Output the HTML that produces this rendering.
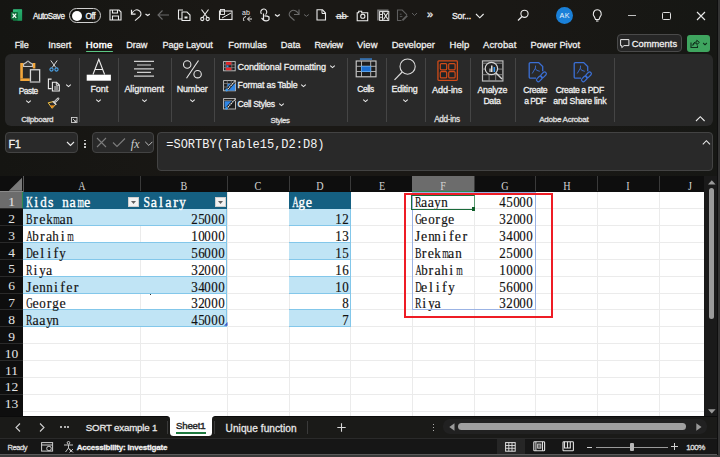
<!DOCTYPE html>
<html><head><meta charset="utf-8"><style>
html,body{margin:0;padding:0;width:720px;height:457px;overflow:hidden;background:#1b1a18;}
.r{position:absolute;}
.t{position:absolute;white-space:nowrap;}
.s{-webkit-text-stroke-width:0.28px;}
svg.r{overflow:visible;}
</style></head><body>
<div class="r" style="left:0px;top:0px;width:720px;height:457px;background:linear-gradient(90deg,#151512 0%,#1a1815 30%,#1a1815 70%,#161714 100%);"></div>
<svg class="r" style="left:10px;top:9px;" width="13" height="12" viewBox="0 0 13 12"><defs><linearGradient id="xg" x1="0" y1="0" x2="0" y2="1"><stop offset="0" stop-color="#33c481"/><stop offset="1" stop-color="#107c41"/></linearGradient></defs><rect x="2.9" y="0.3" width="9.2" height="11.5" rx="0.8" fill="url(#xg)"/><rect x="7.5" y="0.3" width="4.6" height="11.5" fill="#21a366" opacity="0.6"/><rect x="0.8" y="2.9" width="7.2" height="7.5" rx="0.8" fill="#0f6e3b"/><path d="M2.6 4.6L6.2 8.8M6.2 4.6L2.6 8.8" stroke="#fff" stroke-width="1.2"/></svg>
<div class="t s" style="left:33.00px;top:11.000px;font-size:8.15px;line-height:11px;color:#f0f0f0;font-family:'Liberation Sans', sans-serif;letter-spacing:-0.476px;">AutoSave</div>
<div class="r" style="left:69px;top:8px;width:30px;height:13px;border:1px solid #d0d0d0;border-radius:8px;"></div>
<div class="r" style="left:72px;top:10.5px;width:10px;height:10px;border-radius:50%;background:#fff;"></div>
<div class="t s" style="left:85.60px;top:11.000px;font-size:8.26px;line-height:11px;color:#f4f4f4;font-family:'Liberation Sans', sans-serif;letter-spacing:-0.452px;">Off</div>
<svg class="r" style="left:109px;top:9px;" width="13" height="12" viewBox="0 0 13 12"><path d="M1 1h9l2 2v8H1z" fill="none" stroke="#ebebeb" stroke-width="1.1"/><path d="M3.5 1v3h5V1M3.5 11V7h6v4" fill="none" stroke="#ebebeb" stroke-width="1.1"/></svg>
<svg class="r" style="left:129px;top:8px;" width="22" height="14" viewBox="0 0 22 14"><path d="M2.5 1.7V6.1H6.6" fill="none" stroke="#ebebeb" stroke-width="1.2"/><path d="M2.5 6.1C4 3 7 1.2 9.5 2.2C12 3.2 12.8 6.5 11 8.3L6 12.6" fill="none" stroke="#ebebeb" stroke-width="1.1"/><path d="M16.5 6.1L18.7 7.6L20.8 6.1" fill="none" stroke="#ebebeb" stroke-width="1.2"/></svg>
<svg class="r" style="left:157px;top:9px;" width="13" height="12" viewBox="0 0 13 12"><path d="M1 6h11M5.5 1.5L1 6l4.5 4.5" fill="none" stroke="#6a6a6a" stroke-width="1.1"/></svg>
<svg class="r" style="left:177px;top:9px;" width="14" height="12" viewBox="0 0 14 12"><path d="M6 1H1.5v9H5" fill="none" stroke="#ebebeb" stroke-width="1.1"/><path d="M5 3h5l3 3v5.5H5z" fill="none" stroke="#ebebeb" stroke-width="1.1"/><rect x="7.5" y="7.5" width="3" height="2" fill="#ebebeb"/></svg>
<svg class="r" style="left:200px;top:9px;" width="10" height="12" viewBox="0 0 10 12"><path d="M1.5 0.5L7 8M8.5 0.5L3 8" fill="none" stroke="#ebebeb" stroke-width="1.1"/><circle cx="2.3" cy="10" r="1.6" fill="none" stroke="#ebebeb" stroke-width="1.1"/><circle cx="7.7" cy="10" r="1.6" fill="none" stroke="#ebebeb" stroke-width="1.1"/></svg>
<svg class="r" style="left:219px;top:9px;" width="14" height="11" viewBox="0 0 14 11"><rect x="0.5" y="2" width="12.5" height="8.5" fill="none" stroke="#ebebeb" stroke-width="1.1"/><path d="M3 9l9-5" stroke="#ebebeb" stroke-width="1"/><rect x="1.5" y="0.5" width="4" height="5" fill="none" stroke="#ebebeb" stroke-width="0.9"/></svg>
<svg class="r" style="left:241px;top:9px;" width="12" height="13" viewBox="0 0 12 13"><text x="1" y="6" font-size="7" font-family="Liberation Sans" fill="#ebebeb">ab</text><path d="M5 7.5C2.5 8 1.8 10 3 12M9 7.5L6.5 10L9 12.5M6.8 10H11" fill="none" stroke="#ebebeb" stroke-width="1"/></svg>
<svg class="r" style="left:259px;top:9px;" width="11" height="13" viewBox="0 0 11 13"><path d="M6.5 5.5A3 3 0 1 0 2.5 5" fill="none" stroke="#ebebeb" stroke-width="1.1"/><path d="M4.5 4.5v6.5c1 1 4.5 1.3 5.5-0.5V8c-1-1-3-1.2-4.5-1.2" fill="none" stroke="#ebebeb" stroke-width="1.2"/><path d="M2.5 9l2 2" stroke="#ebebeb" stroke-width="1.1"/></svg>
<svg class="r" style="left:274px;top:13px;" width="7" height="5" viewBox="0 0 7 5"><path d="M1 1.5L3.4 3.3L5.8 1.5" fill="none" stroke="#ebebeb" stroke-width="1.3"/></svg>
<svg class="r" style="left:287px;top:8px;" width="14" height="14" viewBox="0 0 14 14"><path d="M12 1.5V6.5H7" fill="none" stroke="#6a6a6a" stroke-width="1.1"/><path d="M12 6.5C10.5 3.5 7.5 1.5 5 2.5C2.5 3.5 1.2 6.5 3 8.5L7.5 12.5" fill="none" stroke="#6a6a6a" stroke-width="1.1"/></svg>
<svg class="r" style="left:302.5px;top:13px;" width="7" height="5" viewBox="0 0 7 5"><path d="M1 1.5L3.4 3.3L5.8 1.5" fill="none" stroke="#6a6a6a" stroke-width="1"/></svg>
<svg class="r" style="left:316px;top:9px;" width="11" height="12" viewBox="0 0 11 12"><path d="M1 0.8h5.5L9.5 4v7H1z" fill="none" stroke="#ebebeb" stroke-width="1.1"/><path d="M6 1v3.5h3.5" fill="none" stroke="#ebebeb" stroke-width="1"/></svg>
<svg class="r" style="left:335px;top:9px;" width="14" height="12" viewBox="0 0 14 12"><text x="1.2" y="9.9" font-size="9.5" font-family="Liberation Sans" fill="#ebebeb" stroke="#ebebeb" stroke-width="0.2">ab</text><path d="M0.5 7.4h13" stroke="#ebebeb" stroke-width="1"/></svg>
<svg class="r" style="left:356px;top:9.5px;" width="13" height="11" viewBox="0 0 13 11"><path d="M1.2 2.8h1.5V1.2h3v1.6h6v8H1.2z" fill="none" stroke="#ebebeb" stroke-width="1.1"/><circle cx="6.8" cy="6.2" r="2.1" fill="none" stroke="#ebebeb" stroke-width="1.1"/></svg>
<svg class="r" style="left:377px;top:9px;" width="13" height="12" viewBox="0 0 13 12"><path d="M1 11.5V1.2H11.5" fill="none" stroke="#7a7a7a" stroke-width="1.6"/><rect x="2.6" y="2.6" width="9.2" height="8.8" fill="none" stroke="#ebebeb" stroke-width="1"/><path d="M2.6 5.5h3M2.6 8.3h3M5.5 2.6v8.8" stroke="#ebebeb" stroke-width="0.9"/><path d="M6.5 3.5l4.5 7M11 3.5l-4.5 7" stroke="#ebebeb" stroke-width="1.1"/></svg>
<svg class="r" style="left:396px;top:9px;" width="13" height="13" viewBox="0 0 13 13"><path d="M5.5 11.5H1.5V1H6.2L11 5.8" fill="none" stroke="#5f5f5f" stroke-width="1.1"/><path d="M11.2 6.6L6.4 11.4" stroke="#5f5f5f" stroke-width="2"/><path d="M3.8 5.2h1.8M3.8 7.6h2.6" stroke="#5f5f5f" stroke-width="0.9"/></svg>
<svg class="r" style="left:411px;top:12px;" width="7" height="5" viewBox="0 0 7 5"><path d="M1 1l2.5 2.5L6 1" fill="none" stroke="#5f5f5f" stroke-width="1"/></svg>
<div class="t s" style="left:427.00px;top:6.500px;font-size:11px;line-height:15px;color:#ebebeb;font-family:'Liberation Sans', sans-serif;">»</div>
<div class="t s" style="left:451.90px;top:10.000px;font-size:8.72px;line-height:12px;color:#f0f0f0;font-family:'Liberation Sans', sans-serif;letter-spacing:-0.212px;">Sor...</div>
<svg class="r" style="left:474.5px;top:13px;" width="10" height="7" viewBox="0 0 10 7"><path d="M1 1l3.8 3.8 3.8-3.8" fill="none" stroke="#ebebeb" stroke-width="1.15"/></svg>
<svg class="r" style="left:517px;top:9px;" width="12" height="13" viewBox="0 0 12 13"><circle cx="7.5" cy="4.8" r="3.6" fill="none" stroke="#ebebeb" stroke-width="1.1"/><path d="M5 7.5L1 11.5" stroke="#ebebeb" stroke-width="1.2"/></svg>
<div class="r" style="left:555.7px;top:6.8px;width:17.4px;height:17.4px;border-radius:50%;background:#1a80d8;"></div>
<div class="t" style="left:559.50px;top:10.500px;font-size:7.24px;line-height:10px;color:#eaf2fb;font-family:'Liberation Sans', sans-serif;letter-spacing:0.335px;">AK</div>
<svg class="r" style="left:592px;top:9px;" width="11" height="13" viewBox="0 0 11 13"><path d="M2.5 8C0 5.5 1.5 0.8 5.3 0.8S10.5 5.5 8 8L7 10.5H3.5z" fill="none" stroke="#ebebeb" stroke-width="1.1"/><path d="M4 12h2.5" stroke="#ebebeb" stroke-width="1.1"/></svg>
<div class="r" style="left:627.7px;top:14.5px;width:8.5px;height:1px;background:#c0c0c0;"></div>
<div class="r" style="left:662.3px;top:11.5px;width:6.4px;height:6.4px;border:1.1px solid #e0e0e0;border-radius:1.5px;"></div>
<svg class="r" style="left:696px;top:11px;" width="10" height="10" viewBox="0 0 10 10"><path d="M1 1l8 8M9 1L1 9" stroke="#e8e8e8" stroke-width="1.1"/></svg>
<div class="t s" style="left:14.70px;top:39.000px;font-size:8.99px;line-height:12px;color:#f0f0f0;font-family:'Liberation Sans', sans-serif;letter-spacing:-0.158px;">File</div>
<div class="t s" style="left:48.30px;top:38.500px;font-size:9.25px;line-height:13px;color:#f0f0f0;font-family:'Liberation Sans', sans-serif;letter-spacing:-0.025px;">Insert</div>
<div class="t s" style="left:126.30px;top:39.000px;font-size:9.19px;line-height:12px;color:#f0f0f0;font-family:'Liberation Sans', sans-serif;letter-spacing:-0.086px;">Draw</div>
<div class="t s" style="left:162.50px;top:39.000px;font-size:9.15px;line-height:12px;color:#f0f0f0;font-family:'Liberation Sans', sans-serif;letter-spacing:-0.088px;">Page Layout</div>
<div class="t s" style="left:228.30px;top:38.500px;font-size:9.29px;line-height:13px;color:#f0f0f0;font-family:'Liberation Sans', sans-serif;">Formulas</div>
<div class="t s" style="left:280.80px;top:38.500px;font-size:9.31px;line-height:13px;color:#f0f0f0;font-family:'Liberation Sans', sans-serif;">Data</div>
<div class="t s" style="left:314.50px;top:39.000px;font-size:8.99px;line-height:12px;color:#f0f0f0;font-family:'Liberation Sans', sans-serif;letter-spacing:-0.197px;">Review</div>
<div class="t s" style="left:357.00px;top:38.000px;font-size:9.42px;line-height:13px;color:#f0f0f0;font-family:'Liberation Sans', sans-serif;letter-spacing:0.082px;">View</div>
<div class="t s" style="left:391.80px;top:38.000px;font-size:9.39px;line-height:13px;color:#f0f0f0;font-family:'Liberation Sans', sans-serif;letter-spacing:0.048px;">Developer</div>
<div class="t s" style="left:449.50px;top:38.000px;font-size:9.47px;line-height:13px;color:#f0f0f0;font-family:'Liberation Sans', sans-serif;letter-spacing:0.113px;">Help</div>
<div class="t s" style="left:483.00px;top:38.000px;font-size:9.48px;line-height:13px;color:#f0f0f0;font-family:'Liberation Sans', sans-serif;letter-spacing:0.107px;">Acrobat</div>
<div class="t s" style="left:530.50px;top:38.500px;font-size:9.29px;line-height:13px;color:#f0f0f0;font-family:'Liberation Sans', sans-serif;">Power Pivot</div>
<div class="t s" style="left:85.80px;top:38.000px;font-size:9.64px;line-height:13px;color:#ffffff;font-family:'Liberation Sans', sans-serif;letter-spacing:0.320px;-webkit-text-stroke:0.45px #ffffff;">Home</div>
<div class="r" style="left:86.3px;top:50.8px;width:27px;height:1.6px;background:#5cc785;border-radius:1px;"></div>
<div class="r" style="left:617.2px;top:34.3px;width:62.5px;height:15.5px;border:1px solid #4a4a4a;border-radius:4px;background:#262626;"></div>
<svg class="r" style="left:620px;top:38.5px;" width="10" height="9" viewBox="0 0 10 9"><path d="M0.6 0.6h8.3v6H4l-2.2 2V6.6H0.6z" fill="none" stroke="#ebebeb" stroke-width="1"/></svg>
<div class="t s" style="left:631.70px;top:37.500px;font-size:9.36px;line-height:13px;color:#f0f0f0;font-family:'Liberation Sans', sans-serif;letter-spacing:0.035px;">Comments</div>
<div class="r" style="left:687px;top:35px;width:23px;height:16.7px;border-radius:3px;background:#3fa55f;"></div>
<svg class="r" style="left:689px;top:37px;" width="20" height="13" viewBox="0 0 20 13"><path d="M2 5.5v5h6.5V8.5" fill="none" stroke="#10301c" stroke-width="1.1"/><path d="M3.8 8.5c0-2.2 1.6-3.6 4-3.6V3.2l2.6 2.2-2.6 2.2V6.1c-1.8 0-3.2 0.8-4 2.4z" fill="none" stroke="#10301c" stroke-width="1"/><path d="M14.2 6l1.8 1.8 1.8-1.8" fill="none" stroke="#10301c" stroke-width="1.1"/></svg>
<div class="r" style="left:5.2px;top:54.3px;width:708px;height:72px;border-radius:6px;background:#292929;"></div>
<div class="r" style="left:79.4px;top:58px;width:1px;height:64px;background:#454545;"></div>
<div class="r" style="left:118.4px;top:58px;width:1px;height:64px;background:#454545;"></div>
<div class="r" style="left:170.6px;top:58px;width:1px;height:64px;background:#454545;"></div>
<div class="r" style="left:214.4px;top:58px;width:1px;height:64px;background:#454545;"></div>
<div class="r" style="left:346.5px;top:58px;width:1px;height:64px;background:#454545;"></div>
<div class="r" style="left:385.6px;top:58px;width:1px;height:64px;background:#454545;"></div>
<div class="r" style="left:424.5px;top:58px;width:1px;height:64px;background:#454545;"></div>
<div class="r" style="left:469.8px;top:58px;width:1px;height:64px;background:#454545;"></div>
<div class="r" style="left:514.7px;top:58px;width:1px;height:64px;background:#454545;"></div>
<div class="r" style="left:614.2px;top:58px;width:1px;height:64px;background:#454545;"></div>
<svg class="r" style="left:18px;top:58px;" width="24" height="26" viewBox="0 0 24 26"><path d="M3.55 20.4V6.2H5.6M14.4 6.2h1.65v4.3" fill="none" stroke="#f3a73b" stroke-width="2.6"/><path d="M2.25 21.7H11.8" stroke="#f3a73b" stroke-width="2.6"/><path d="M5.6 8.5V6L8.6 4.3Q10 1.8 11.4 4.3L14.4 6V8.5z" fill="#3a3a3a" stroke="#c8c8c8" stroke-width="1.1"/><rect x="12.45" y="11.75" width="9.2" height="12.2" fill="#2a2a2a" stroke="#d6d6d6" stroke-width="1.3"/><path d="M12.5 23.6h9" stroke="#8a8a8a" stroke-width="1.2"/></svg>
<div class="t s" style="left:18.80px;top:85.500px;font-size:8.4px;line-height:11px;color:#f0f0f0;font-family:'Liberation Sans', sans-serif;letter-spacing:-0.516px;">Paste</div>
<svg class="r" style="left:24.8px;top:98.8px;" width="7" height="5" viewBox="0 0 7 5"><path d="M1.2 1.6L3.5 3.6L5.8 1.6" fill="none" stroke="#ebebeb" stroke-width="1.05"/></svg>
<svg class="r" style="left:49px;top:60px;" width="10" height="12" viewBox="0 0 10 12"><path d="M1.8 0.5L6.8 7.5M8.2 0.5L3.2 7.5" stroke="#d9d9d9" stroke-width="1"/><circle cx="2.5" cy="9.5" r="1.6" fill="none" stroke="#4aa3e8" stroke-width="1.1"/><circle cx="7.5" cy="9.5" r="1.6" fill="none" stroke="#4aa3e8" stroke-width="1.1"/></svg>
<svg class="r" style="left:47px;top:78px;" width="14" height="14" viewBox="0 0 14 14"><path d="M4.6 1.1H1.4v9.5H4.6" fill="none" stroke="#ebebeb" stroke-width="1.1"/><path d="M5.4 4.3H9.6L12.3 7V13H5.4z" fill="none" stroke="#ebebeb" stroke-width="1.1"/><rect x="7.2" y="8" width="3.8" height="4" fill="#8a8a8a"/><path d="M9.3 4.3v3h3" fill="none" stroke="#ebebeb" stroke-width="0.9"/></svg>
<svg class="r" style="left:64.5px;top:83px;" width="7" height="5" viewBox="0 0 7 5"><path d="M1.2 1.6L3.5 3.6L5.8 1.6" fill="none" stroke="#ebebeb" stroke-width="1.05"/></svg>
<svg class="r" style="left:47px;top:97px;" width="13" height="12" viewBox="0 0 13 12"><path d="M1.2 5.8L6.3 4.6L8.8 7.2L5.2 11.3z" fill="#2a2a2a" stroke="#f3c242" stroke-width="1"/><path d="M3.2 8.6L7.2 8.3L5.2 11z" fill="#f08a1a"/><path d="M5.8 4.2L9.3 7.7" stroke="#d6d6d6" stroke-width="1.3"/><path d="M11.2 1.6L8.2 4.6" stroke="#d6d6d6" stroke-width="2.3" stroke-linecap="round"/><path d="M11.2 1.6L8.2 4.6" stroke="#2a2a2a" stroke-width="0.7"/></svg>
<div class="t s" style="left:21.20px;top:114.000px;font-size:8.12px;line-height:11px;color:#e0e0e0;font-family:'Liberation Sans', sans-serif;letter-spacing:-0.294px;">Clipboard</div>
<svg class="r" style="left:70.5px;top:117px;" width="7" height="6" viewBox="0 0 7 6"><rect x="0.5" y="0.5" width="5.5" height="5" fill="none" stroke="#cfcfcf" stroke-width="0.9"/><path d="M2 2l3 3M5 3v2H3" fill="none" stroke="#cfcfcf" stroke-width="0.9"/></svg>
<svg class="r" style="left:86px;top:58px;" width="26" height="23" viewBox="0 0 26 23"><path d="M7 16.5L12.8 1.2L18.6 16.5M9 11.5h7.6" fill="none" stroke="#ededed" stroke-width="1.1"/><rect x="0.7" y="16.7" width="24.2" height="6" fill="#fff"/></svg>
<div class="t s" style="left:90.40px;top:83.000px;font-size:9.1px;line-height:12px;color:#f0f0f0;font-family:'Liberation Sans', sans-serif;letter-spacing:-0.133px;">Font</div>
<svg class="r" style="left:95.3px;top:97.5px;" width="7" height="5" viewBox="0 0 7 5"><path d="M1.2 1.6L3.5 3.6L5.8 1.6" fill="none" stroke="#ebebeb" stroke-width="1.05"/></svg>
<svg class="r" style="left:133px;top:60px;" width="22" height="18" viewBox="0 0 22 18"><path d="M1 1.3h20M4 5h14M1 8.9h20M4 12.3h14M1 16.2h20" stroke="#cfcfcf" stroke-width="1.2"/></svg>
<div class="t s" style="left:124.40px;top:83.000px;font-size:9.1px;line-height:12px;color:#f0f0f0;font-family:'Liberation Sans', sans-serif;letter-spacing:-0.106px;">Alignment</div>
<svg class="r" style="left:140.5px;top:97.5px;" width="7" height="5" viewBox="0 0 7 5"><path d="M1.2 1.6L3.5 3.6L5.8 1.6" fill="none" stroke="#ebebeb" stroke-width="1.05"/></svg>
<svg class="r" style="left:182px;top:59px;" width="21" height="21" viewBox="0 0 21 21"><circle cx="5.2" cy="5.5" r="3.7" fill="none" stroke="#e8e8e8" stroke-width="1.1"/><circle cx="15.6" cy="15.2" r="3.7" fill="none" stroke="#e8e8e8" stroke-width="1.1"/><path d="M16.5 1.5L4.5 19.3" stroke="#e8e8e8" stroke-width="1.1"/></svg>
<div class="t s" style="left:176.70px;top:83.000px;font-size:9.03px;line-height:12px;color:#f0f0f0;font-family:'Liberation Sans', sans-serif;letter-spacing:-0.180px;">Number</div>
<svg class="r" style="left:188.8px;top:97.5px;" width="7" height="5" viewBox="0 0 7 5"><path d="M1.2 1.6L3.5 3.6L5.8 1.6" fill="none" stroke="#ebebeb" stroke-width="1.05"/></svg>
<svg class="r" style="left:222.5px;top:60.5px;" width="13" height="11" viewBox="0 0 13 11"><rect x="0.6" y="0.6" width="11.6" height="9.2" fill="#1e1e1e" stroke="#c8c8c8" stroke-width="0.9"/><path d="M2.8 0.6v9.2M8.8 0.6v9.2M0.6 3.8h11.6M0.6 6.6h11.6" stroke="#8a8a8a" stroke-width="0.7"/><rect x="3" y="1.1" width="5.3" height="2.6" fill="#e8252a"/><rect x="3.5" y="4.4" width="2" height="2" fill="#3d8be8"/><rect x="3" y="6.7" width="5.3" height="2.5" fill="#e8252a"/></svg>
<svg class="r" style="left:222.5px;top:79.5px;" width="13" height="12" viewBox="0 0 13 12"><rect x="0.6" y="0.6" width="11.9" height="10.2" fill="#1e1e1e" stroke="#c8c8c8" stroke-width="0.9"/><path d="M0.6 3.5h11.9M0.6 7h11.9M4.3 0.6v10.2M8.3 0.6v10.2" stroke="#8a8a8a" stroke-width="0.7"/><rect x="4.6" y="3.8" width="7.6" height="6.8" fill="#2f86e6"/><path d="M11.6 1.4L4.6 9.4" stroke="#161616" stroke-width="2.8"/><path d="M11.6 1.4L4.6 9.4" stroke="#e6e6e6" stroke-width="1.2" stroke-dasharray="1.6 0.6"/><circle cx="3.7" cy="10" r="1.4" fill="#3d9cf0"/></svg>
<svg class="r" style="left:222.5px;top:97.8px;" width="13" height="12" viewBox="0 0 13 12"><rect x="0.6" y="0.6" width="11.9" height="10.4" fill="#1e1e1e" stroke="#c8c8c8" stroke-width="0.9"/><path d="M0.6 2.6h11.9" stroke="#8a8a8a" stroke-width="0.8"/><path d="M1.6 3.3H10.6L5 9H1.6z" fill="#2f86e6"/><path d="M11.8 1.6L4.4 9.8" stroke="#161616" stroke-width="2.8"/><path d="M11.8 1.6L4.4 9.8" stroke="#e6e6e6" stroke-width="1.2" stroke-dasharray="1.6 0.6"/><circle cx="3.5" cy="10.3" r="1.4" fill="#3d9cf0"/></svg>
<div class="t s" style="left:237.60px;top:61.000px;font-size:9.04px;line-height:12px;color:#f0f0f0;font-family:'Liberation Sans', sans-serif;letter-spacing:-0.121px;">Conditional Formatting</div>
<svg class="r" style="left:328.5px;top:64px;" width="7" height="5" viewBox="0 0 7 5"><path d="M1.2 1.6L3.5 3.6L5.8 1.6" fill="none" stroke="#ebebeb" stroke-width="1.05"/></svg>
<div class="t s" style="left:237.60px;top:79.000px;font-size:8.84px;line-height:12px;color:#f0f0f0;font-family:'Liberation Sans', sans-serif;letter-spacing:-0.222px;">Format as Table</div>
<svg class="r" style="left:299.8px;top:83px;" width="7" height="5" viewBox="0 0 7 5"><path d="M1.2 1.6L3.5 3.6L5.8 1.6" fill="none" stroke="#ebebeb" stroke-width="1.05"/></svg>
<div class="t s" style="left:237.60px;top:98.000px;font-size:8.59px;line-height:12px;color:#f0f0f0;font-family:'Liberation Sans', sans-serif;letter-spacing:-0.309px;">Cell Styles</div>
<svg class="r" style="left:277.5px;top:102px;" width="7" height="5" viewBox="0 0 7 5"><path d="M1.2 1.6L3.5 3.6L5.8 1.6" fill="none" stroke="#ebebeb" stroke-width="1.05"/></svg>
<div class="t s" style="left:270.60px;top:115.000px;font-size:7.85px;line-height:11px;color:#e0e0e0;font-family:'Liberation Sans', sans-serif;letter-spacing:-0.418px;">Styles</div>
<svg class="r" style="left:355px;top:57px;" width="22" height="21" viewBox="0 0 22 21"><path d="M4.9 2.05H17" stroke="#3d8fe6" stroke-width="1.3"/><rect x="1.2" y="4" width="19.8" height="15.8" fill="#1e1e1e" stroke="#d0d0d0" stroke-width="1.1"/><path d="M6.5 4v15.8M15.7 4v15.8M1.2 9.3h19.8M1.2 14.5h19.8" stroke="#bdbdbd" stroke-width="0.9"/><rect x="6.5" y="9.3" width="9.2" height="5.2" fill="#1d6fd1" stroke="#58a6f0" stroke-width="0.8"/></svg>
<div class="t s" style="left:357.30px;top:83.500px;font-size:8.43px;line-height:11px;color:#f0f0f0;font-family:'Liberation Sans', sans-serif;letter-spacing:-0.439px;">Cells</div>
<svg class="r" style="left:362.2px;top:97.5px;" width="7" height="5" viewBox="0 0 7 5"><path d="M1.2 1.6L3.5 3.6L5.8 1.6" fill="none" stroke="#ebebeb" stroke-width="1.05"/></svg>
<svg class="r" style="left:393px;top:57px;" width="24" height="24" viewBox="0 0 24 24"><circle cx="14.6" cy="9.6" r="7.6" fill="none" stroke="#dcdcdc" stroke-width="1.1"/><path d="M9.2 15L1.5 22.8" stroke="#dcdcdc" stroke-width="1.2"/></svg>
<div class="t s" style="left:391.50px;top:83.000px;font-size:8.92px;line-height:12px;color:#f0f0f0;font-family:'Liberation Sans', sans-serif;letter-spacing:-0.183px;">Editing</div>
<svg class="r" style="left:401.5px;top:97.5px;" width="7" height="5" viewBox="0 0 7 5"><path d="M1.2 1.6L3.5 3.6L5.8 1.6" fill="none" stroke="#ebebeb" stroke-width="1.05"/></svg>
<svg class="r" style="left:436px;top:59px;" width="23" height="23" viewBox="0 0 23 23"><rect x="1.95" y="1.95" width="19.4" height="19.4" rx="0.8" fill="#1e2326" stroke="#d24b18" stroke-width="1.3"/><rect x="4.3" y="4.6" width="6.4" height="6.2" rx="1" fill="none" stroke="#d24b18" stroke-width="1.2"/><rect x="12.7" y="4.6" width="6.4" height="6.2" rx="1" fill="none" stroke="#d24b18" stroke-width="1.2"/><rect x="4.3" y="12.7" width="6.4" height="6.2" rx="1" fill="none" stroke="#d24b18" stroke-width="1.2"/><rect x="12.7" y="12.7" width="6.4" height="6.2" rx="1" fill="none" stroke="#d24b18" stroke-width="1.2"/></svg>
<div class="t s" style="left:432.10px;top:84.000px;font-size:9.12px;line-height:12px;color:#f0f0f0;font-family:'Liberation Sans', sans-serif;letter-spacing:-0.103px;">Add-ins</div>
<div class="t s" style="left:434.20px;top:114.000px;font-size:8.15px;line-height:11px;color:#e0e0e0;font-family:'Liberation Sans', sans-serif;letter-spacing:-0.288px;">Add-ins</div>
<svg class="r" style="left:481px;top:59px;" width="23" height="23" viewBox="0 0 23 23"><rect x="1.5" y="1.9" width="20.4" height="20.1" fill="#222" stroke="#bdbdbd" stroke-width="1.2"/><path d="M1.5 4.2h20.4M1.5 10.1h20.4M1.5 15.7h20.4M8.1 4.2v17.8M14.7 4.2v17.8" stroke="#8f8f8f" stroke-width="0.9"/><circle cx="10.4" cy="9.5" r="6.2" fill="#232323" stroke="#d6d6d6" stroke-width="1.2"/><path d="M15 14l6 6" stroke="#d6d6d6" stroke-width="1.4"/><rect x="8.5" y="9.5" width="1.1" height="3.5" fill="#e0e0e0"/><rect x="10" y="6.5" width="1.5" height="6.5" fill="#e0e0e0"/><rect x="12.5" y="8" width="1.6" height="5" fill="#3a9af0"/></svg>
<div class="t s" style="left:477.40px;top:84.000px;font-size:8.85px;line-height:12px;color:#f0f0f0;font-family:'Liberation Sans', sans-serif;letter-spacing:-0.251px;">Analyze</div>
<div class="t s" style="left:483.40px;top:95.000px;font-size:8.77px;line-height:12px;color:#f0f0f0;font-family:'Liberation Sans', sans-serif;letter-spacing:-0.350px;">Data</div>
<svg class="r" style="left:528px;top:61px;" width="20" height="21" viewBox="0 0 20 21"><path d="M8 17.2H2.5Q1.2 17.2 1.2 15.9V2.9Q1.2 1.6 2.5 1.6H10.7L14.7 5.6V10.2" fill="none" stroke="#3b6fd4" stroke-width="1.3"/><path d="M4.2 12.5L7.3 7.3L7.6 4.6M7.3 7.3L8.6 9.3L11.8 10.3" fill="none" stroke="#3b6fd4" stroke-width="0.9"/><rect x="8.1" y="16" width="6.6" height="3.6" rx="1.8" transform="rotate(-45 11.4 17.8)" fill="#292929" stroke="#3b6fd4" stroke-width="1.2"/><rect x="12.2" y="12" width="6.6" height="3.6" rx="1.8" transform="rotate(-45 15.5 13.8)" fill="none" stroke="#3b6fd4" stroke-width="1.2"/></svg>
<svg class="r" style="left:573px;top:61px;" width="20" height="21" viewBox="0 0 20 21"><path d="M8 17.2H2.5Q1.2 17.2 1.2 15.9V2.9Q1.2 1.6 2.5 1.6H10.7L14.7 5.6V10.2" fill="none" stroke="#3b6fd4" stroke-width="1.3"/><path d="M4.2 12.5L7.3 7.3L7.6 4.6M7.3 7.3L8.6 9.3L11.8 10.3" fill="none" stroke="#3b6fd4" stroke-width="0.9"/><rect x="8.1" y="16" width="6.6" height="3.6" rx="1.8" transform="rotate(-45 11.4 17.8)" fill="#292929" stroke="#3b6fd4" stroke-width="1.2"/><rect x="12.2" y="12" width="6.6" height="3.6" rx="1.8" transform="rotate(-45 15.5 13.8)" fill="none" stroke="#3b6fd4" stroke-width="1.2"/></svg>
<div class="t s" style="left:523.30px;top:84.000px;font-size:8.66px;line-height:12px;color:#f0f0f0;font-family:'Liberation Sans', sans-serif;letter-spacing:-0.356px;">Create</div>
<div class="t s" style="left:524.20px;top:95.000px;font-size:8.51px;line-height:12px;color:#f0f0f0;font-family:'Liberation Sans', sans-serif;letter-spacing:-0.506px;">a PDF</div>
<div class="t s" style="left:555.80px;top:84.000px;font-size:8.58px;line-height:12px;color:#f0f0f0;font-family:'Liberation Sans', sans-serif;letter-spacing:-0.370px;">Create a PDF</div>
<div class="t s" style="left:553.30px;top:95.000px;font-size:8.81px;line-height:12px;color:#f0f0f0;font-family:'Liberation Sans', sans-serif;letter-spacing:-0.230px;">and Share link</div>
<div class="t s" style="left:539.20px;top:114.000px;font-size:8.1px;line-height:11px;color:#e0e0e0;font-family:'Liberation Sans', sans-serif;letter-spacing:-0.303px;">Adobe Acrobat</div>
<svg class="r" style="left:695px;top:116px;" width="11" height="6" viewBox="0 0 11 6"><path d="M1 5l4.3-4.3L9.6 5" fill="none" stroke="#ebebeb" stroke-width="1.1"/></svg>
<div class="r" style="left:5.1px;top:132.2px;width:70.7px;height:18.5px;border:1px solid #434343;border-radius:4px;background:#292929;"></div>
<div class="t s" style="left:8.60px;top:136.500px;font-size:10.97px;line-height:15px;color:#f4f4f4;font-family:'Liberation Sans', sans-serif;letter-spacing:-0.580px;">F1</div>
<svg class="r" style="left:66px;top:141px;" width="9" height="6" viewBox="0 0 9 6"><path d="M1 1l3.5 3.5L8 1" fill="none" stroke="#ebebeb" stroke-width="1.1"/></svg>
<div class="r" style="left:84.2px;top:139.8px;width:1.7px;height:1.7px;background:#dedede;border-radius:50%;"></div>
<div class="r" style="left:84.2px;top:143px;width:1.7px;height:1.7px;background:#dedede;border-radius:50%;"></div>
<div class="r" style="left:84.2px;top:146.2px;width:1.7px;height:1.7px;background:#dedede;border-radius:50%;"></div>
<div class="r" style="left:92.2px;top:132.2px;width:60.2px;height:18.5px;border:1px solid #434343;border-radius:4px;background:#292929;"></div>
<svg class="r" style="left:96px;top:137px;" width="11" height="11" viewBox="0 0 11 11"><path d="M1 1l9 9M10 1L1 10" stroke="#7c7c7c" stroke-width="1.1"/></svg>
<svg class="r" style="left:112px;top:137px;" width="14" height="11" viewBox="0 0 14 11"><path d="M1 5.5l4 4 8-8" fill="none" stroke="#7c7c7c" stroke-width="1.1"/></svg>
<div class="t" style="left:130.80px;top:136.000px;font-size:12px;line-height:16px;color:#cfcfcf;font-family:'Liberation Serif', serif;"><i>fx</i></div>
<svg class="r" style="left:144.2px;top:140.5px;" width="10" height="6" viewBox="0 0 10 6"><path d="M1.2 0.8l3.6 3.6 3.6-3.6" fill="none" stroke="#bdbdbd" stroke-width="1"/></svg>
<div class="r" style="left:157.2px;top:132.2px;width:553.8px;height:36.7px;border:1px solid #434343;border-radius:4px;background:#292929;"></div>
<div class="t" style="left:166.30px;top:137.000px;font-size:11.99px;line-height:16px;color:#f4f4f4;font-family:'Liberation Mono', monospace;">=SORTBY(Table15,D2:D8)</div>
<svg class="r" style="left:701.5px;top:139.5px;" width="10" height="6" viewBox="0 0 10 6"><path d="M0.8 4.3l3.6-3.6 3.6 3.6" fill="none" stroke="#ebebeb" stroke-width="1.05"/></svg>
<div class="r" style="left:0px;top:175.8px;width:704px;height:16.2px;background:#0e0e0e;"></div>
<div class="r" style="left:0px;top:192px;width:23px;height:223.5px;background:#0e0e0e;"></div>
<div class="r" style="left:23px;top:192px;width:680.8px;height:223.5px;background:#ffffff;"></div>
<div class="r" style="left:160px;top:414px;width:60px;height:6px;background:#ffffff;"></div>
<svg class="r" style="left:0px;top:176px;" width="23" height="16" viewBox="0 0 23 16"><path d="M22 1.8V14.7H8.8z" fill="#7a7a7a"/></svg>
<div class="r" style="left:0px;top:191px;width:23px;height:1px;background:#8a8a8a;"></div>
<div class="r" style="left:139.5px;top:176px;width:1px;height:15px;background:#3a3a3a;"></div>
<div class="r" style="left:226.5px;top:176px;width:1px;height:15px;background:#3a3a3a;"></div>
<div class="r" style="left:288.5px;top:176px;width:1px;height:15px;background:#3a3a3a;"></div>
<div class="r" style="left:350.2px;top:176px;width:1px;height:15px;background:#3a3a3a;"></div>
<div class="r" style="left:411.9px;top:176px;width:1px;height:15px;background:#3a3a3a;"></div>
<div class="r" style="left:473.6px;top:176px;width:1px;height:15px;background:#3a3a3a;"></div>
<div class="r" style="left:535.3px;top:176px;width:1px;height:15px;background:#3a3a3a;"></div>
<div class="r" style="left:597.0px;top:176px;width:1px;height:15px;background:#3a3a3a;"></div>
<div class="r" style="left:658.7px;top:176px;width:1px;height:15px;background:#3a3a3a;"></div>
<div class="r" style="left:22.5px;top:176px;width:1px;height:16px;background:#5a5a5a;"></div>
<div class="r" style="left:412.4px;top:176px;width:61.7px;height:15px;background:#6c6c6c;"></div>
<div class="r" style="left:412.4px;top:190.5px;width:61.7px;height:1.5px;background:#2f8a4f;"></div>
<div class="r" style="left:0px;top:192px;width:22px;height:16.85px;background:#6c6c6c;"></div>
<div class="r" style="left:22px;top:192px;width:1.4px;height:16.85px;background:#2f8a4f;"></div>
<div class="t" style="left:61.5px;top:178.72px;width:40px;text-align:center;font-size:13px;line-height:13px;color:#d4d4d4;font-family:'Liberation Serif', serif;transform:scaleX(0.78);">A</div>
<div class="t" style="left:163.5px;top:178.72px;width:40px;text-align:center;font-size:13px;line-height:13px;color:#d4d4d4;font-family:'Liberation Serif', serif;transform:scaleX(0.78);">B</div>
<div class="t" style="left:238.0px;top:178.72px;width:40px;text-align:center;font-size:13px;line-height:13px;color:#d4d4d4;font-family:'Liberation Serif', serif;transform:scaleX(0.78);">C</div>
<div class="t" style="left:299.9px;top:178.72px;width:40px;text-align:center;font-size:13px;line-height:13px;color:#d4d4d4;font-family:'Liberation Serif', serif;transform:scaleX(0.78);">D</div>
<div class="t" style="left:361.5px;top:178.72px;width:40px;text-align:center;font-size:13px;line-height:13px;color:#d4d4d4;font-family:'Liberation Serif', serif;transform:scaleX(0.78);">E</div>
<div class="t" style="left:423.2px;top:178.72px;width:40px;text-align:center;font-size:13px;line-height:13px;color:#d4d4d4;font-family:'Liberation Serif', serif;transform:scaleX(0.78);">F</div>
<div class="t" style="left:484.9px;top:178.72px;width:40px;text-align:center;font-size:13px;line-height:13px;color:#d4d4d4;font-family:'Liberation Serif', serif;transform:scaleX(0.78);">G</div>
<div class="t" style="left:546.6px;top:178.72px;width:40px;text-align:center;font-size:13px;line-height:13px;color:#d4d4d4;font-family:'Liberation Serif', serif;transform:scaleX(0.78);">H</div>
<div class="t" style="left:608.4px;top:178.72px;width:40px;text-align:center;font-size:13px;line-height:13px;color:#d4d4d4;font-family:'Liberation Serif', serif;transform:scaleX(0.78);">I</div>
<div class="t" style="left:670.0px;top:178.72px;width:40px;text-align:center;font-size:13px;line-height:13px;color:#d4d4d4;font-family:'Liberation Serif', serif;transform:scaleX(0.78);">J</div>
<div class="t" style="left:0px;top:195.00px;width:23px;text-align:center;font-size:13.5px;line-height:13.5px;color:#e4e4e4;font-family:'Liberation Serif', serif;">1</div>
<div class="t" style="left:0px;top:211.85px;width:23px;text-align:center;font-size:13.5px;line-height:13.5px;color:#e4e4e4;font-family:'Liberation Serif', serif;">2</div>
<div class="r" style="left:0px;top:208.35px;width:23px;height:1px;background:#2a2a2a;"></div>
<div class="t" style="left:0px;top:228.70px;width:23px;text-align:center;font-size:13.5px;line-height:13.5px;color:#e4e4e4;font-family:'Liberation Serif', serif;">3</div>
<div class="r" style="left:0px;top:225.2px;width:23px;height:1px;background:#2a2a2a;"></div>
<div class="t" style="left:0px;top:245.55px;width:23px;text-align:center;font-size:13.5px;line-height:13.5px;color:#e4e4e4;font-family:'Liberation Serif', serif;">4</div>
<div class="r" style="left:0px;top:242.05px;width:23px;height:1px;background:#2a2a2a;"></div>
<div class="t" style="left:0px;top:262.40px;width:23px;text-align:center;font-size:13.5px;line-height:13.5px;color:#e4e4e4;font-family:'Liberation Serif', serif;">5</div>
<div class="r" style="left:0px;top:258.9px;width:23px;height:1px;background:#2a2a2a;"></div>
<div class="t" style="left:0px;top:279.25px;width:23px;text-align:center;font-size:13.5px;line-height:13.5px;color:#e4e4e4;font-family:'Liberation Serif', serif;">6</div>
<div class="r" style="left:0px;top:275.75px;width:23px;height:1px;background:#2a2a2a;"></div>
<div class="t" style="left:0px;top:296.10px;width:23px;text-align:center;font-size:13.5px;line-height:13.5px;color:#e4e4e4;font-family:'Liberation Serif', serif;">7</div>
<div class="r" style="left:0px;top:292.6px;width:23px;height:1px;background:#2a2a2a;"></div>
<div class="t" style="left:0px;top:312.95px;width:23px;text-align:center;font-size:13.5px;line-height:13.5px;color:#e4e4e4;font-family:'Liberation Serif', serif;">8</div>
<div class="r" style="left:0px;top:309.45000000000005px;width:23px;height:1px;background:#2a2a2a;"></div>
<div class="t" style="left:0px;top:329.80px;width:23px;text-align:center;font-size:13.5px;line-height:13.5px;color:#e4e4e4;font-family:'Liberation Serif', serif;">9</div>
<div class="r" style="left:0px;top:326.3px;width:23px;height:1px;background:#2a2a2a;"></div>
<div class="t" style="left:0px;top:346.65px;width:23px;text-align:center;font-size:13.5px;line-height:13.5px;color:#e4e4e4;font-family:'Liberation Serif', serif;">10</div>
<div class="r" style="left:0px;top:343.15px;width:23px;height:1px;background:#2a2a2a;"></div>
<div class="t" style="left:0px;top:363.50px;width:23px;text-align:center;font-size:13.5px;line-height:13.5px;color:#e4e4e4;font-family:'Liberation Serif', serif;">11</div>
<div class="r" style="left:0px;top:360.0px;width:23px;height:1px;background:#2a2a2a;"></div>
<div class="t" style="left:0px;top:380.35px;width:23px;text-align:center;font-size:13.5px;line-height:13.5px;color:#e4e4e4;font-family:'Liberation Serif', serif;">12</div>
<div class="r" style="left:0px;top:376.85px;width:23px;height:1px;background:#2a2a2a;"></div>
<div class="t" style="left:0px;top:397.20px;width:23px;text-align:center;font-size:13.5px;line-height:13.5px;color:#e4e4e4;font-family:'Liberation Serif', serif;">13</div>
<div class="r" style="left:0px;top:393.70000000000005px;width:23px;height:1px;background:#2a2a2a;"></div>
<div class="r" style="left:23px;top:208.35px;width:680.8px;height:1px;background:#ebebeb;"></div>
<div class="r" style="left:23px;top:225.2px;width:680.8px;height:1px;background:#ebebeb;"></div>
<div class="r" style="left:23px;top:242.05px;width:680.8px;height:1px;background:#ebebeb;"></div>
<div class="r" style="left:23px;top:258.9px;width:680.8px;height:1px;background:#ebebeb;"></div>
<div class="r" style="left:23px;top:275.75px;width:680.8px;height:1px;background:#ebebeb;"></div>
<div class="r" style="left:23px;top:292.6px;width:680.8px;height:1px;background:#ebebeb;"></div>
<div class="r" style="left:23px;top:309.45000000000005px;width:680.8px;height:1px;background:#ebebeb;"></div>
<div class="r" style="left:23px;top:326.3px;width:680.8px;height:1px;background:#ebebeb;"></div>
<div class="r" style="left:23px;top:343.15px;width:680.8px;height:1px;background:#ebebeb;"></div>
<div class="r" style="left:23px;top:360.0px;width:680.8px;height:1px;background:#ebebeb;"></div>
<div class="r" style="left:23px;top:376.85px;width:680.8px;height:1px;background:#ebebeb;"></div>
<div class="r" style="left:23px;top:393.70000000000005px;width:680.8px;height:1px;background:#ebebeb;"></div>
<div class="r" style="left:23px;top:410.55px;width:680.8px;height:1px;background:#ebebeb;"></div>
<div class="r" style="left:139.5px;top:192px;width:1px;height:223.5px;background:#ebebeb;"></div>
<div class="r" style="left:226.5px;top:192px;width:1px;height:223.5px;background:#ebebeb;"></div>
<div class="r" style="left:288.5px;top:192px;width:1px;height:223.5px;background:#ebebeb;"></div>
<div class="r" style="left:350.2px;top:192px;width:1px;height:223.5px;background:#ebebeb;"></div>
<div class="r" style="left:411.9px;top:192px;width:1px;height:223.5px;background:#ebebeb;"></div>
<div class="r" style="left:473.6px;top:192px;width:1px;height:223.5px;background:#ebebeb;"></div>
<div class="r" style="left:535.3px;top:192px;width:1px;height:223.5px;background:#ebebeb;"></div>
<div class="r" style="left:597.0px;top:192px;width:1px;height:223.5px;background:#ebebeb;"></div>
<div class="r" style="left:658.7px;top:192px;width:1px;height:223.5px;background:#ebebeb;"></div>
<div class="r" style="left:23.2px;top:192.0px;width:203.60000000000002px;height:16.85px;background:#156082;"></div>
<div class="r" style="left:23.2px;top:208.85px;width:203.60000000000002px;height:16.85px;background:#c0e4f5;"></div>
<div class="r" style="left:23.2px;top:225.2px;width:203.60000000000002px;height:1px;background:#83c7ea;"></div>
<div class="r" style="left:23.2px;top:242.55px;width:203.60000000000002px;height:16.85px;background:#c0e4f5;"></div>
<div class="r" style="left:23.2px;top:242.05px;width:203.60000000000002px;height:1px;background:#83c7ea;"></div>
<div class="r" style="left:23.2px;top:258.9px;width:203.60000000000002px;height:1px;background:#83c7ea;"></div>
<div class="r" style="left:23.2px;top:276.25px;width:203.60000000000002px;height:16.85px;background:#c0e4f5;"></div>
<div class="r" style="left:23.2px;top:275.75px;width:203.60000000000002px;height:1px;background:#83c7ea;"></div>
<div class="r" style="left:23.2px;top:292.6px;width:203.60000000000002px;height:1px;background:#83c7ea;"></div>
<div class="r" style="left:23.2px;top:309.95000000000005px;width:203.60000000000002px;height:16.85px;background:#c0e4f5;"></div>
<div class="r" style="left:23.2px;top:309.45000000000005px;width:203.60000000000002px;height:1px;background:#83c7ea;"></div>
<div class="r" style="left:23.2px;top:326.3px;width:203.60000000000002px;height:1px;background:#83c7ea;"></div>
<div class="r" style="left:226.0px;top:208.85px;width:1px;height:117.95000000000002px;background:#83c7ea;"></div>
<div class="r" style="left:289px;top:192.0px;width:61.89999999999998px;height:16.85px;background:#156082;"></div>
<div class="r" style="left:289px;top:208.85px;width:61.89999999999998px;height:16.85px;background:#c0e4f5;"></div>
<div class="r" style="left:289px;top:225.2px;width:61.89999999999998px;height:1px;background:#83c7ea;"></div>
<div class="r" style="left:289px;top:242.55px;width:61.89999999999998px;height:16.85px;background:#c0e4f5;"></div>
<div class="r" style="left:289px;top:242.05px;width:61.89999999999998px;height:1px;background:#83c7ea;"></div>
<div class="r" style="left:289px;top:258.9px;width:61.89999999999998px;height:1px;background:#83c7ea;"></div>
<div class="r" style="left:289px;top:276.25px;width:61.89999999999998px;height:16.85px;background:#c0e4f5;"></div>
<div class="r" style="left:289px;top:275.75px;width:61.89999999999998px;height:1px;background:#83c7ea;"></div>
<div class="r" style="left:289px;top:292.6px;width:61.89999999999998px;height:1px;background:#83c7ea;"></div>
<div class="r" style="left:289px;top:309.95000000000005px;width:61.89999999999998px;height:16.85px;background:#c0e4f5;"></div>
<div class="r" style="left:289px;top:309.45000000000005px;width:61.89999999999998px;height:1px;background:#83c7ea;"></div>
<div class="r" style="left:289px;top:326.3px;width:61.89999999999998px;height:1px;background:#83c7ea;"></div>
<div class="r" style="left:350.09999999999997px;top:208.85px;width:1px;height:117.95000000000002px;background:#83c7ea;"></div>
<div class="r" style="left:128px;top:196.7px;width:11px;height:10.5px;background:#f2f2f2;border:0.5px solid #cfcfcf;box-sizing:border-box;"></div>
<svg class="r" style="left:131px;top:200.5px;" width="6" height="4" viewBox="0 0 6 4"><path d="M0 0h5L2.5 3z" fill="#606060"/></svg>
<div class="r" style="left:215px;top:196.7px;width:11px;height:10.5px;background:#f2f2f2;border:0.5px solid #cfcfcf;box-sizing:border-box;"></div>
<svg class="r" style="left:218px;top:200.5px;" width="6" height="4" viewBox="0 0 6 4"><path d="M0 0h5L2.5 3z" fill="#606060"/></svg>
<svg class="r" style="left:223.5px;top:322.3px;" width="3.5" height="3.8" viewBox="0 0 3.5 3.8"><path d="M3.5 0V3.8H0z" fill="#3758c8"/></svg>
<div class="t" style="left:25.40px;top:193.000px;font-size:14px;line-height:19px;color:#ffffff;font-family:'Liberation Serif', serif;transform:scaleX(1.0);transform-origin:0 0;-webkit-text-stroke:0.35px #fff;"><span style="display:inline-block;width:7.250px;text-align:center;transform:scaleX(0.643)">K</span><span style="display:inline-block;width:7.250px;text-align:center">i</span><span style="display:inline-block;width:7.250px;text-align:center;transform:scaleX(0.929)">d</span><span style="display:inline-block;width:7.250px;text-align:center">s</span><span style="display:inline-block;width:7.250px;text-align:center">&nbsp;</span><span style="display:inline-block;width:7.250px;text-align:center;transform:scaleX(0.929)">n</span><span style="display:inline-block;width:7.250px;text-align:center">a</span><span style="display:inline-block;width:7.250px;text-align:center;transform:scaleX(0.597)">m</span><span style="display:inline-block;width:7.250px;text-align:center">e</span></div>
<div class="t" style="left:142.90px;top:193.000px;font-size:14px;line-height:19px;color:#ffffff;font-family:'Liberation Serif', serif;transform:scaleX(1.0);transform-origin:0 0;-webkit-text-stroke:0.35px #fff;"><span style="display:inline-block;width:7.250px;text-align:center;transform:scaleX(0.835)">S</span><span style="display:inline-block;width:7.250px;text-align:center">a</span><span style="display:inline-block;width:7.250px;text-align:center">l</span><span style="display:inline-block;width:7.250px;text-align:center">a</span><span style="display:inline-block;width:7.250px;text-align:center">r</span><span style="display:inline-block;width:7.250px;text-align:center;transform:scaleX(0.929)">y</span></div>
<div class="t" style="left:290.70px;top:193.000px;font-size:14px;line-height:19px;color:#ffffff;font-family:'Liberation Serif', serif;transform:scaleX(1.0);transform-origin:0 0;-webkit-text-stroke:0.35px #fff;"><span style="display:inline-block;width:7.300px;text-align:center;transform:scaleX(0.643)">A</span><span style="display:inline-block;width:7.300px;text-align:center;transform:scaleX(0.929)">g</span><span style="display:inline-block;width:7.300px;text-align:center">e</span></div>
<div class="t" style="left:25.40px;top:210.000px;font-size:14px;line-height:19px;color:#111;font-family:'Liberation Serif', serif;transform:scaleX(1.0);transform-origin:0 0;-webkit-text-stroke:0.15px #111;"><span style="display:inline-block;width:6.780px;text-align:center;transform:scaleX(0.696)">B</span><span style="display:inline-block;width:6.780px;text-align:center">r</span><span style="display:inline-block;width:6.780px;text-align:center">e</span><span style="display:inline-block;width:6.780px;text-align:center;transform:scaleX(0.929)">k</span><span style="display:inline-block;width:6.780px;text-align:center;transform:scaleX(0.597)">m</span><span style="display:inline-block;width:6.780px;text-align:center">a</span><span style="display:inline-block;width:6.780px;text-align:center;transform:scaleX(0.929)">n</span></div>
<div class="t" style="left:190.90px;top:210.000px;font-size:14px;line-height:19px;color:#111;font-family:'Liberation Serif', serif;transform:scaleX(1.0);transform-origin:0 0;-webkit-text-stroke:0.15px #111;"><span style="display:inline-block;width:6.780px;text-align:center;transform:scaleX(0.929)">2</span><span style="display:inline-block;width:6.780px;text-align:center;transform:scaleX(0.929)">5</span><span style="display:inline-block;width:6.780px;text-align:center;transform:scaleX(0.929)">0</span><span style="display:inline-block;width:6.780px;text-align:center;transform:scaleX(0.929)">0</span><span style="display:inline-block;width:6.780px;text-align:center;transform:scaleX(0.929)">0</span></div>
<div class="t" style="left:334.84px;top:210.000px;font-size:14px;line-height:19px;color:#111;font-family:'Liberation Serif', serif;transform:scaleX(1.0);transform-origin:0 0;-webkit-text-stroke:0.15px #111;"><span style="display:inline-block;width:6.780px;text-align:center;transform:scaleX(0.929)">1</span><span style="display:inline-block;width:6.780px;text-align:center;transform:scaleX(0.929)">2</span></div>
<div class="t" style="left:25.40px;top:227.000px;font-size:14px;line-height:19px;color:#111;font-family:'Liberation Serif', serif;transform:scaleX(1.0);transform-origin:0 0;-webkit-text-stroke:0.15px #111;"><span style="display:inline-block;width:6.780px;text-align:center;transform:scaleX(0.643)">A</span><span style="display:inline-block;width:6.780px;text-align:center;transform:scaleX(0.929)">b</span><span style="display:inline-block;width:6.780px;text-align:center">r</span><span style="display:inline-block;width:6.780px;text-align:center">a</span><span style="display:inline-block;width:6.780px;text-align:center;transform:scaleX(0.929)">h</span><span style="display:inline-block;width:6.780px;text-align:center">i</span><span style="display:inline-block;width:6.780px;text-align:center;transform:scaleX(0.597)">m</span></div>
<div class="t" style="left:190.90px;top:227.000px;font-size:14px;line-height:19px;color:#111;font-family:'Liberation Serif', serif;transform:scaleX(1.0);transform-origin:0 0;-webkit-text-stroke:0.15px #111;"><span style="display:inline-block;width:6.780px;text-align:center;transform:scaleX(0.929)">1</span><span style="display:inline-block;width:6.780px;text-align:center;transform:scaleX(0.929)">0</span><span style="display:inline-block;width:6.780px;text-align:center;transform:scaleX(0.929)">0</span><span style="display:inline-block;width:6.780px;text-align:center;transform:scaleX(0.929)">0</span><span style="display:inline-block;width:6.780px;text-align:center;transform:scaleX(0.929)">0</span></div>
<div class="t" style="left:334.84px;top:227.000px;font-size:14px;line-height:19px;color:#111;font-family:'Liberation Serif', serif;transform:scaleX(1.0);transform-origin:0 0;-webkit-text-stroke:0.15px #111;"><span style="display:inline-block;width:6.780px;text-align:center;transform:scaleX(0.929)">1</span><span style="display:inline-block;width:6.780px;text-align:center;transform:scaleX(0.929)">3</span></div>
<div class="t" style="left:25.40px;top:244.000px;font-size:14px;line-height:19px;color:#111;font-family:'Liberation Serif', serif;transform:scaleX(1.0);transform-origin:0 0;-webkit-text-stroke:0.15px #111;"><span style="display:inline-block;width:6.780px;text-align:center;transform:scaleX(0.643)">D</span><span style="display:inline-block;width:6.780px;text-align:center">e</span><span style="display:inline-block;width:6.780px;text-align:center">l</span><span style="display:inline-block;width:6.780px;text-align:center">i</span><span style="display:inline-block;width:6.780px;text-align:center">f</span><span style="display:inline-block;width:6.780px;text-align:center;transform:scaleX(0.929)">y</span></div>
<div class="t" style="left:190.90px;top:244.000px;font-size:14px;line-height:19px;color:#111;font-family:'Liberation Serif', serif;transform:scaleX(1.0);transform-origin:0 0;-webkit-text-stroke:0.15px #111;"><span style="display:inline-block;width:6.780px;text-align:center;transform:scaleX(0.929)">5</span><span style="display:inline-block;width:6.780px;text-align:center;transform:scaleX(0.929)">6</span><span style="display:inline-block;width:6.780px;text-align:center;transform:scaleX(0.929)">0</span><span style="display:inline-block;width:6.780px;text-align:center;transform:scaleX(0.929)">0</span><span style="display:inline-block;width:6.780px;text-align:center;transform:scaleX(0.929)">0</span></div>
<div class="t" style="left:334.84px;top:244.000px;font-size:14px;line-height:19px;color:#111;font-family:'Liberation Serif', serif;transform:scaleX(1.0);transform-origin:0 0;-webkit-text-stroke:0.15px #111;"><span style="display:inline-block;width:6.780px;text-align:center;transform:scaleX(0.929)">1</span><span style="display:inline-block;width:6.780px;text-align:center;transform:scaleX(0.929)">5</span></div>
<div class="t" style="left:25.40px;top:261.000px;font-size:14px;line-height:19px;color:#111;font-family:'Liberation Serif', serif;transform:scaleX(1.0);transform-origin:0 0;-webkit-text-stroke:0.15px #111;"><span style="display:inline-block;width:6.780px;text-align:center;transform:scaleX(0.696)">R</span><span style="display:inline-block;width:6.780px;text-align:center">i</span><span style="display:inline-block;width:6.780px;text-align:center;transform:scaleX(0.929)">y</span><span style="display:inline-block;width:6.780px;text-align:center">a</span></div>
<div class="t" style="left:190.90px;top:261.000px;font-size:14px;line-height:19px;color:#111;font-family:'Liberation Serif', serif;transform:scaleX(1.0);transform-origin:0 0;-webkit-text-stroke:0.15px #111;"><span style="display:inline-block;width:6.780px;text-align:center;transform:scaleX(0.929)">3</span><span style="display:inline-block;width:6.780px;text-align:center;transform:scaleX(0.929)">2</span><span style="display:inline-block;width:6.780px;text-align:center;transform:scaleX(0.929)">0</span><span style="display:inline-block;width:6.780px;text-align:center;transform:scaleX(0.929)">0</span><span style="display:inline-block;width:6.780px;text-align:center;transform:scaleX(0.929)">0</span></div>
<div class="t" style="left:334.84px;top:261.000px;font-size:14px;line-height:19px;color:#111;font-family:'Liberation Serif', serif;transform:scaleX(1.0);transform-origin:0 0;-webkit-text-stroke:0.15px #111;"><span style="display:inline-block;width:6.780px;text-align:center;transform:scaleX(0.929)">1</span><span style="display:inline-block;width:6.780px;text-align:center;transform:scaleX(0.929)">6</span></div>
<div class="t" style="left:25.40px;top:278.000px;font-size:14px;line-height:19px;color:#111;font-family:'Liberation Serif', serif;transform:scaleX(1.0);transform-origin:0 0;-webkit-text-stroke:0.15px #111;"><span style="display:inline-block;width:6.780px;text-align:center">J</span><span style="display:inline-block;width:6.780px;text-align:center">e</span><span style="display:inline-block;width:6.780px;text-align:center;transform:scaleX(0.929)">n</span><span style="display:inline-block;width:6.780px;text-align:center;transform:scaleX(0.929)">n</span><span style="display:inline-block;width:6.780px;text-align:center">i</span><span style="display:inline-block;width:6.780px;text-align:center">f</span><span style="display:inline-block;width:6.780px;text-align:center">e</span><span style="display:inline-block;width:6.780px;text-align:center">r</span></div>
<div class="t" style="left:190.90px;top:278.000px;font-size:14px;line-height:19px;color:#111;font-family:'Liberation Serif', serif;transform:scaleX(1.0);transform-origin:0 0;-webkit-text-stroke:0.15px #111;"><span style="display:inline-block;width:6.780px;text-align:center;transform:scaleX(0.929)">3</span><span style="display:inline-block;width:6.780px;text-align:center;transform:scaleX(0.929)">4</span><span style="display:inline-block;width:6.780px;text-align:center;transform:scaleX(0.929)">0</span><span style="display:inline-block;width:6.780px;text-align:center;transform:scaleX(0.929)">0</span><span style="display:inline-block;width:6.780px;text-align:center;transform:scaleX(0.929)">0</span></div>
<div class="t" style="left:334.84px;top:278.000px;font-size:14px;line-height:19px;color:#111;font-family:'Liberation Serif', serif;transform:scaleX(1.0);transform-origin:0 0;-webkit-text-stroke:0.15px #111;"><span style="display:inline-block;width:6.780px;text-align:center;transform:scaleX(0.929)">1</span><span style="display:inline-block;width:6.780px;text-align:center;transform:scaleX(0.929)">0</span></div>
<div class="t" style="left:25.40px;top:294.000px;font-size:14px;line-height:19px;color:#111;font-family:'Liberation Serif', serif;transform:scaleX(1.0);transform-origin:0 0;-webkit-text-stroke:0.15px #111;"><span style="display:inline-block;width:6.780px;text-align:center;transform:scaleX(0.643)">G</span><span style="display:inline-block;width:6.780px;text-align:center">e</span><span style="display:inline-block;width:6.780px;text-align:center;transform:scaleX(0.929)">o</span><span style="display:inline-block;width:6.780px;text-align:center">r</span><span style="display:inline-block;width:6.780px;text-align:center;transform:scaleX(0.929)">g</span><span style="display:inline-block;width:6.780px;text-align:center">e</span></div>
<div class="t" style="left:190.90px;top:294.000px;font-size:14px;line-height:19px;color:#111;font-family:'Liberation Serif', serif;transform:scaleX(1.0);transform-origin:0 0;-webkit-text-stroke:0.15px #111;"><span style="display:inline-block;width:6.780px;text-align:center;transform:scaleX(0.929)">3</span><span style="display:inline-block;width:6.780px;text-align:center;transform:scaleX(0.929)">2</span><span style="display:inline-block;width:6.780px;text-align:center;transform:scaleX(0.929)">0</span><span style="display:inline-block;width:6.780px;text-align:center;transform:scaleX(0.929)">0</span><span style="display:inline-block;width:6.780px;text-align:center;transform:scaleX(0.929)">0</span></div>
<div class="t" style="left:341.62px;top:294.000px;font-size:14px;line-height:19px;color:#111;font-family:'Liberation Serif', serif;transform:scaleX(1.0);transform-origin:0 0;-webkit-text-stroke:0.15px #111;"><span style="display:inline-block;width:6.780px;text-align:center;transform:scaleX(0.929)">8</span></div>
<div class="t" style="left:25.40px;top:311.000px;font-size:14px;line-height:19px;color:#111;font-family:'Liberation Serif', serif;transform:scaleX(1.0);transform-origin:0 0;-webkit-text-stroke:0.15px #111;"><span style="display:inline-block;width:6.780px;text-align:center;transform:scaleX(0.696)">R</span><span style="display:inline-block;width:6.780px;text-align:center">a</span><span style="display:inline-block;width:6.780px;text-align:center">a</span><span style="display:inline-block;width:6.780px;text-align:center;transform:scaleX(0.929)">y</span><span style="display:inline-block;width:6.780px;text-align:center;transform:scaleX(0.929)">n</span></div>
<div class="t" style="left:190.90px;top:311.000px;font-size:14px;line-height:19px;color:#111;font-family:'Liberation Serif', serif;transform:scaleX(1.0);transform-origin:0 0;-webkit-text-stroke:0.15px #111;"><span style="display:inline-block;width:6.780px;text-align:center;transform:scaleX(0.929)">4</span><span style="display:inline-block;width:6.780px;text-align:center;transform:scaleX(0.929)">5</span><span style="display:inline-block;width:6.780px;text-align:center;transform:scaleX(0.929)">0</span><span style="display:inline-block;width:6.780px;text-align:center;transform:scaleX(0.929)">0</span><span style="display:inline-block;width:6.780px;text-align:center;transform:scaleX(0.929)">0</span></div>
<div class="t" style="left:341.62px;top:311.000px;font-size:14px;line-height:19px;color:#111;font-family:'Liberation Serif', serif;transform:scaleX(1.0);transform-origin:0 0;-webkit-text-stroke:0.15px #111;"><span style="display:inline-block;width:6.780px;text-align:center;transform:scaleX(0.929)">7</span></div>
<div class="t" style="left:414.00px;top:193.000px;font-size:14px;line-height:19px;color:#111;font-family:'Liberation Serif', serif;transform:scaleX(1.0);transform-origin:0 0;-webkit-text-stroke:0.15px #111;"><span style="display:inline-block;width:6.780px;text-align:center;transform:scaleX(0.696)">R</span><span style="display:inline-block;width:6.780px;text-align:center">a</span><span style="display:inline-block;width:6.780px;text-align:center">a</span><span style="display:inline-block;width:6.780px;text-align:center;transform:scaleX(0.929)">y</span><span style="display:inline-block;width:6.780px;text-align:center;transform:scaleX(0.929)">n</span></div>
<div class="t" style="left:499.20px;top:193.000px;font-size:14px;line-height:19px;color:#111;font-family:'Liberation Serif', serif;transform:scaleX(1.0);transform-origin:0 0;-webkit-text-stroke:0.15px #111;"><span style="display:inline-block;width:6.780px;text-align:center;transform:scaleX(0.929)">4</span><span style="display:inline-block;width:6.780px;text-align:center;transform:scaleX(0.929)">5</span><span style="display:inline-block;width:6.780px;text-align:center;transform:scaleX(0.929)">0</span><span style="display:inline-block;width:6.780px;text-align:center;transform:scaleX(0.929)">0</span><span style="display:inline-block;width:6.780px;text-align:center;transform:scaleX(0.929)">0</span></div>
<div class="t" style="left:414.00px;top:210.000px;font-size:14px;line-height:19px;color:#111;font-family:'Liberation Serif', serif;transform:scaleX(1.0);transform-origin:0 0;-webkit-text-stroke:0.15px #111;"><span style="display:inline-block;width:6.780px;text-align:center;transform:scaleX(0.643)">G</span><span style="display:inline-block;width:6.780px;text-align:center">e</span><span style="display:inline-block;width:6.780px;text-align:center;transform:scaleX(0.929)">o</span><span style="display:inline-block;width:6.780px;text-align:center">r</span><span style="display:inline-block;width:6.780px;text-align:center;transform:scaleX(0.929)">g</span><span style="display:inline-block;width:6.780px;text-align:center">e</span></div>
<div class="t" style="left:499.20px;top:210.000px;font-size:14px;line-height:19px;color:#111;font-family:'Liberation Serif', serif;transform:scaleX(1.0);transform-origin:0 0;-webkit-text-stroke:0.15px #111;"><span style="display:inline-block;width:6.780px;text-align:center;transform:scaleX(0.929)">3</span><span style="display:inline-block;width:6.780px;text-align:center;transform:scaleX(0.929)">2</span><span style="display:inline-block;width:6.780px;text-align:center;transform:scaleX(0.929)">0</span><span style="display:inline-block;width:6.780px;text-align:center;transform:scaleX(0.929)">0</span><span style="display:inline-block;width:6.780px;text-align:center;transform:scaleX(0.929)">0</span></div>
<div class="t" style="left:414.00px;top:227.000px;font-size:14px;line-height:19px;color:#111;font-family:'Liberation Serif', serif;transform:scaleX(1.0);transform-origin:0 0;-webkit-text-stroke:0.15px #111;"><span style="display:inline-block;width:6.780px;text-align:center">J</span><span style="display:inline-block;width:6.780px;text-align:center">e</span><span style="display:inline-block;width:6.780px;text-align:center;transform:scaleX(0.929)">n</span><span style="display:inline-block;width:6.780px;text-align:center;transform:scaleX(0.929)">n</span><span style="display:inline-block;width:6.780px;text-align:center">i</span><span style="display:inline-block;width:6.780px;text-align:center">f</span><span style="display:inline-block;width:6.780px;text-align:center">e</span><span style="display:inline-block;width:6.780px;text-align:center">r</span></div>
<div class="t" style="left:499.20px;top:227.000px;font-size:14px;line-height:19px;color:#111;font-family:'Liberation Serif', serif;transform:scaleX(1.0);transform-origin:0 0;-webkit-text-stroke:0.15px #111;"><span style="display:inline-block;width:6.780px;text-align:center;transform:scaleX(0.929)">3</span><span style="display:inline-block;width:6.780px;text-align:center;transform:scaleX(0.929)">4</span><span style="display:inline-block;width:6.780px;text-align:center;transform:scaleX(0.929)">0</span><span style="display:inline-block;width:6.780px;text-align:center;transform:scaleX(0.929)">0</span><span style="display:inline-block;width:6.780px;text-align:center;transform:scaleX(0.929)">0</span></div>
<div class="t" style="left:414.00px;top:244.000px;font-size:14px;line-height:19px;color:#111;font-family:'Liberation Serif', serif;transform:scaleX(1.0);transform-origin:0 0;-webkit-text-stroke:0.15px #111;"><span style="display:inline-block;width:6.780px;text-align:center;transform:scaleX(0.696)">B</span><span style="display:inline-block;width:6.780px;text-align:center">r</span><span style="display:inline-block;width:6.780px;text-align:center">e</span><span style="display:inline-block;width:6.780px;text-align:center;transform:scaleX(0.929)">k</span><span style="display:inline-block;width:6.780px;text-align:center;transform:scaleX(0.597)">m</span><span style="display:inline-block;width:6.780px;text-align:center">a</span><span style="display:inline-block;width:6.780px;text-align:center;transform:scaleX(0.929)">n</span></div>
<div class="t" style="left:499.20px;top:244.000px;font-size:14px;line-height:19px;color:#111;font-family:'Liberation Serif', serif;transform:scaleX(1.0);transform-origin:0 0;-webkit-text-stroke:0.15px #111;"><span style="display:inline-block;width:6.780px;text-align:center;transform:scaleX(0.929)">2</span><span style="display:inline-block;width:6.780px;text-align:center;transform:scaleX(0.929)">5</span><span style="display:inline-block;width:6.780px;text-align:center;transform:scaleX(0.929)">0</span><span style="display:inline-block;width:6.780px;text-align:center;transform:scaleX(0.929)">0</span><span style="display:inline-block;width:6.780px;text-align:center;transform:scaleX(0.929)">0</span></div>
<div class="t" style="left:414.00px;top:261.000px;font-size:14px;line-height:19px;color:#111;font-family:'Liberation Serif', serif;transform:scaleX(1.0);transform-origin:0 0;-webkit-text-stroke:0.15px #111;"><span style="display:inline-block;width:6.780px;text-align:center;transform:scaleX(0.643)">A</span><span style="display:inline-block;width:6.780px;text-align:center;transform:scaleX(0.929)">b</span><span style="display:inline-block;width:6.780px;text-align:center">r</span><span style="display:inline-block;width:6.780px;text-align:center">a</span><span style="display:inline-block;width:6.780px;text-align:center;transform:scaleX(0.929)">h</span><span style="display:inline-block;width:6.780px;text-align:center">i</span><span style="display:inline-block;width:6.780px;text-align:center;transform:scaleX(0.597)">m</span></div>
<div class="t" style="left:499.20px;top:261.000px;font-size:14px;line-height:19px;color:#111;font-family:'Liberation Serif', serif;transform:scaleX(1.0);transform-origin:0 0;-webkit-text-stroke:0.15px #111;"><span style="display:inline-block;width:6.780px;text-align:center;transform:scaleX(0.929)">1</span><span style="display:inline-block;width:6.780px;text-align:center;transform:scaleX(0.929)">0</span><span style="display:inline-block;width:6.780px;text-align:center;transform:scaleX(0.929)">0</span><span style="display:inline-block;width:6.780px;text-align:center;transform:scaleX(0.929)">0</span><span style="display:inline-block;width:6.780px;text-align:center;transform:scaleX(0.929)">0</span></div>
<div class="t" style="left:414.00px;top:278.000px;font-size:14px;line-height:19px;color:#111;font-family:'Liberation Serif', serif;transform:scaleX(1.0);transform-origin:0 0;-webkit-text-stroke:0.15px #111;"><span style="display:inline-block;width:6.780px;text-align:center;transform:scaleX(0.643)">D</span><span style="display:inline-block;width:6.780px;text-align:center">e</span><span style="display:inline-block;width:6.780px;text-align:center">l</span><span style="display:inline-block;width:6.780px;text-align:center">i</span><span style="display:inline-block;width:6.780px;text-align:center">f</span><span style="display:inline-block;width:6.780px;text-align:center;transform:scaleX(0.929)">y</span></div>
<div class="t" style="left:499.20px;top:278.000px;font-size:14px;line-height:19px;color:#111;font-family:'Liberation Serif', serif;transform:scaleX(1.0);transform-origin:0 0;-webkit-text-stroke:0.15px #111;"><span style="display:inline-block;width:6.780px;text-align:center;transform:scaleX(0.929)">5</span><span style="display:inline-block;width:6.780px;text-align:center;transform:scaleX(0.929)">6</span><span style="display:inline-block;width:6.780px;text-align:center;transform:scaleX(0.929)">0</span><span style="display:inline-block;width:6.780px;text-align:center;transform:scaleX(0.929)">0</span><span style="display:inline-block;width:6.780px;text-align:center;transform:scaleX(0.929)">0</span></div>
<div class="t" style="left:414.00px;top:294.000px;font-size:14px;line-height:19px;color:#111;font-family:'Liberation Serif', serif;transform:scaleX(1.0);transform-origin:0 0;-webkit-text-stroke:0.15px #111;"><span style="display:inline-block;width:6.780px;text-align:center;transform:scaleX(0.696)">R</span><span style="display:inline-block;width:6.780px;text-align:center">i</span><span style="display:inline-block;width:6.780px;text-align:center;transform:scaleX(0.929)">y</span><span style="display:inline-block;width:6.780px;text-align:center">a</span></div>
<div class="t" style="left:499.20px;top:294.000px;font-size:14px;line-height:19px;color:#111;font-family:'Liberation Serif', serif;transform:scaleX(1.0);transform-origin:0 0;-webkit-text-stroke:0.15px #111;"><span style="display:inline-block;width:6.780px;text-align:center;transform:scaleX(0.929)">3</span><span style="display:inline-block;width:6.780px;text-align:center;transform:scaleX(0.929)">2</span><span style="display:inline-block;width:6.780px;text-align:center;transform:scaleX(0.929)">0</span><span style="display:inline-block;width:6.780px;text-align:center;transform:scaleX(0.929)">0</span><span style="display:inline-block;width:6.780px;text-align:center;transform:scaleX(0.929)">0</span></div>
<div class="r" style="left:411.9px;top:192px;width:123.9px;height:118px;border:1px solid #9bb3e4;box-sizing:border-box;"></div>
<div class="r" style="left:411px;top:195px;width:64px;height:15px;border:1px solid #1a6b3a;border-right-color:#5a9a70;box-sizing:border-box;"></div>
<div class="r" style="left:472px;top:207px;width:3px;height:4px;background:#0f5f2a;"></div>
<div class="r" style="left:404.1px;top:192.8px;width:148.6px;height:124.9px;border:2.2px solid #ee1c25;box-sizing:border-box;"></div>
<div class="r" style="left:150px;top:293.5px;width:1.2px;height:1.5px;background:#333;"></div>
<div class="r" style="left:703.8px;top:176px;width:14px;height:239.5px;background:#1a1a1a;"></div>
<svg class="r" style="left:707.5px;top:180px;" width="8" height="5" viewBox="0 0 8 5"><path d="M0 4.5L3.8 0.3L7.6 4.5z" fill="#9a9a9a"/></svg>
<div class="r" style="left:708.6px;top:188px;width:5.6px;height:131px;border-radius:3px;background:#9a9a9a;"></div>
<svg class="r" style="left:707.5px;top:408.5px;" width="8" height="5" viewBox="0 0 8 5"><path d="M0 0.3L3.8 4.5L7.6 0.3z" fill="#9a9a9a"/></svg>
<div class="r" style="left:0;top:415.5px;width:169.8px;height:21.5px;background:#1a1a18;border-top:1px solid #0b0b0b;border-top-right-radius:3.5px;"></div>
<div class="r" style="left:212.2px;top:415.5px;width:505.8px;height:21.5px;background:#1a1a18;border-top:1px solid #0b0b0b;border-top-left-radius:3.5px;"></div>
<div class="r" style="left:0px;top:438px;width:718px;height:1px;background:#2a2a2a;"></div>
<div class="r" style="left:0px;top:439px;width:718px;height:15px;background:#161616;"></div>
<div class="r" style="left:0px;top:453.5px;width:717px;height:1.6px;background:#5a5a5a;"></div>
<svg class="r" style="left:15px;top:422.5px;" width="6" height="9" viewBox="0 0 6 9"><path d="M5 0.5L1 4.5l4 4" fill="none" stroke="#d0d0d0" stroke-width="1.1"/></svg>
<svg class="r" style="left:39px;top:422.5px;" width="6" height="9" viewBox="0 0 6 9"><path d="M1 0.5l4 4-4 4" fill="none" stroke="#d0d0d0" stroke-width="1.1"/></svg>
<div class="r" style="left:60.4px;top:425.6px;width:2.1px;height:2.1px;background:#e4e4e4;border-radius:50%;"></div>
<div class="r" style="left:63.6px;top:425.6px;width:2.1px;height:2.1px;background:#e4e4e4;border-radius:50%;"></div>
<div class="r" style="left:66.8px;top:425.6px;width:2.1px;height:2.1px;background:#e4e4e4;border-radius:50%;"></div>
<div class="t s" style="left:85.80px;top:421.000px;font-size:9.69px;line-height:13px;color:#e8e8e8;font-family:'Liberation Sans', sans-serif;letter-spacing:-0.176px;">SORT example 1</div>
<div class="r" style="left:167px;top:421px;width:1px;height:13px;background:#3a3a3a;"></div>
<div class="r" style="left:169.8px;top:414px;width:42.4px;height:21.8px;background:#fff;border-radius:0 0 3.5px 3.5px;"></div>
<div class="t s" style="left:176.10px;top:419.000px;font-size:9.65px;line-height:13px;color:#262626;font-family:'Liberation Sans', sans-serif;letter-spacing:-0.218px;-webkit-text-stroke:0.4px #262626;">Sheet1</div>
<div class="r" style="left:176px;top:431.9px;width:30px;height:1.9px;background:#1f7a3f;"></div>
<div class="r" style="left:214.3px;top:421px;width:1px;height:13px;background:#3a3a3a;"></div>
<div class="t s" style="left:225.60px;top:421.500px;font-size:10.11px;line-height:14px;color:#e8e8e8;font-family:'Liberation Sans', sans-serif;letter-spacing:0.060px;">Unique function</div>
<div class="r" style="left:306.6px;top:421px;width:1px;height:13px;background:#3a3a3a;"></div>
<svg class="r" style="left:337px;top:422.5px;" width="9" height="9" viewBox="0 0 9 9"><path d="M4.5 0.3v8.4M0.3 4.5h8.4" stroke="#d8d8d8" stroke-width="1.1"/></svg>
<div class="r" style="left:432.6px;top:423.6px;width:1.6px;height:1.6px;background:#dcdcdc;border-radius:50%;"></div>
<div class="r" style="left:432.6px;top:426.7px;width:1.6px;height:1.6px;background:#dcdcdc;border-radius:50%;"></div>
<div class="r" style="left:432.6px;top:429.6px;width:1.6px;height:1.6px;background:#dcdcdc;border-radius:50%;"></div>
<div class="r" style="left:443px;top:419px;width:264px;height:15px;border-radius:7px;background:#212121;"></div>
<svg class="r" style="left:448.5px;top:423px;" width="6" height="8" viewBox="0 0 6 8"><path d="M5.5 0.3V7.7L0.3 4z" fill="#9a9a9a"/></svg>
<div class="r" style="left:457.8px;top:423.2px;width:228px;height:6.8px;border-radius:3.5px;background:#a0a0a0;"></div>
<svg class="r" style="left:696px;top:423px;" width="6" height="8" viewBox="0 0 6 8"><path d="M0.3 0.3V7.7L5.5 4z" fill="#9a9a9a"/></svg>
<div class="t s" style="left:7.50px;top:442.500px;font-size:7.58px;line-height:10px;color:#dcdcdc;font-family:'Liberation Sans', sans-serif;letter-spacing:-0.477px;">Ready</div>
<svg class="r" style="left:40.5px;top:441.5px;" width="13" height="10" viewBox="0 0 13 10"><rect x="0.6" y="0.6" width="11" height="8.5" fill="none" stroke="#d0d0d0" stroke-width="1"/><path d="M0.6 3h11" stroke="#d0d0d0" stroke-width="1"/><circle cx="8" cy="6.5" r="2.3" fill="#161616" stroke="#d0d0d0" stroke-width="1"/></svg>
<svg class="r" style="left:63px;top:440.5px;" width="11" height="12" viewBox="0 0 11 12"><circle cx="5.5" cy="1.8" r="1.3" fill="none" stroke="#d8d8d8" stroke-width="0.9"/><path d="M1 4h9M5.5 4v3L2.5 11M5.5 7l3 4M6.5 8l3.5 3.5M10 8l-3.5 3.5" fill="none" stroke="#d8d8d8" stroke-width="0.9"/></svg>
<div class="t s" style="left:76.70px;top:442.000px;font-size:8.04px;line-height:11px;color:#f0f0f0;font-family:'Liberation Sans', sans-serif;font-weight:700;letter-spacing:-0.211px;">Accessibility: Investigate</div>
<div class="r" style="left:496.7px;top:439px;width:28.3px;height:14.8px;background:#262626;"></div>
<svg class="r" style="left:504.5px;top:441.5px;" width="11" height="10" viewBox="0 0 11 10"><rect x="0.6" y="0.6" width="9.6" height="8.6" fill="none" stroke="#e0e0e0" stroke-width="1"/><path d="M3.8 0.6v8.6M7 0.6v8.6M0.6 3.5h9.6M0.6 6.3h9.6" stroke="#e0e0e0" stroke-width="0.9"/></svg>
<svg class="r" style="left:533px;top:441px;" width="13" height="11" viewBox="0 0 13 11"><rect x="0.8" y="0.8" width="10.8" height="9" rx="0.8" fill="none" stroke="#e0e0e0" stroke-width="1.1"/><path d="M2.9 0.8v9M9.5 0.8v9" stroke="#e0e0e0" stroke-width="1"/><rect x="4.6" y="3" width="3.3" height="4.2" fill="#6a6a6a" stroke="#d0d0d0" stroke-width="0.8"/></svg>
<svg class="r" style="left:562px;top:441px;" width="13" height="11" viewBox="0 0 13 11"><rect x="1" y="0.8" width="10.4" height="9" rx="0.8" fill="none" stroke="#e0e0e0" stroke-width="1.1"/><path d="M2.5 0.8V7H8.3V0.8M5.5 0.8V7" fill="none" stroke="#e0e0e0" stroke-width="1.1"/></svg>
<div class="r" style="left:586.7px;top:446.5px;width:5.3px;height:1px;background:#cfcfcf;"></div>
<div class="r" style="left:596px;top:446.8px;width:71.5px;height:1.2px;background:#9a9a9a;"></div>
<div class="r" style="left:630px;top:442.8px;width:4.2px;height:8.4px;background:#b8b8b8;border-radius:1px;"></div>
<svg class="r" style="left:671px;top:443px;" width="7" height="7" viewBox="0 0 7 7"><path d="M3.5 0v7M0 3.5h7" stroke="#cfcfcf" stroke-width="1"/></svg>
<div class="t s" style="left:686.30px;top:442.000px;font-size:7.94px;line-height:11px;color:#e0e0e0;font-family:'Liberation Sans', sans-serif;letter-spacing:-0.442px;">100%</div>
<div class="r" style="left:717px;top:0px;width:1px;height:455px;background:#0e0e0e;"></div>
<div class="r" style="left:718px;top:0px;width:2px;height:457px;background:#333333;"></div>
<div class="r" style="left:0px;top:455px;width:720px;height:2px;background:#3a3a3a;"></div>
</body></html>
